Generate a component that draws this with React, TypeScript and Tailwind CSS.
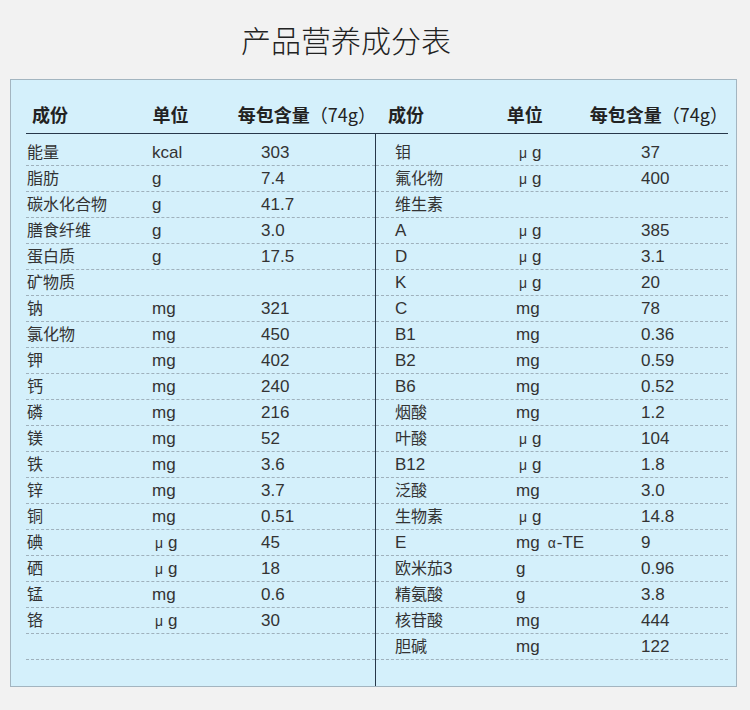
import React from "react";

type Row = [string, string, string];

const left: Row[] = [
  ["能量", "kcal", "303"],
  ["脂肪", "g", "7.4"],
  ["碳水化合物", "g", "41.7"],
  ["膳食纤维", "g", "3.0"],
  ["蛋白质", "g", "17.5"],
  ["矿物质", "", ""],
  ["钠", "mg", "321"],
  ["氯化物", "mg", "450"],
  ["钾", "mg", "402"],
  ["钙", "mg", "240"],
  ["磷", "mg", "216"],
  ["镁", "mg", "52"],
  ["铁", "mg", "3.6"],
  ["锌", "mg", "3.7"],
  ["铜", "mg", "0.51"],
  ["碘", "μg", "45"],
  ["硒", "μg", "18"],
  ["锰", "mg", "0.6"],
  ["铬", "μg", "30"],
  ["", "", ""],
];

const right: Row[] = [
  ["钼", "μg", "37"],
  ["氟化物", "μg", "400"],
  ["维生素", "", ""],
  ["A", "μg", "385"],
  ["D", "μg", "3.1"],
  ["K", "μg", "20"],
  ["C", "mg", "78"],
  ["B1", "mg", "0.36"],
  ["B2", "mg", "0.59"],
  ["B6", "mg", "0.52"],
  ["烟酸", "mg", "1.2"],
  ["叶酸", "μg", "104"],
  ["B12", "μg", "1.8"],
  ["泛酸", "mg", "3.0"],
  ["生物素", "μg", "14.8"],
  ["E", "mgαTE", "9"],
  ["欧米茄3", "g", "0.96"],
  ["精氨酸", "g", "3.8"],
  ["核苷酸", "mg", "444"],
  ["胆碱", "mg", "122"],
];

const isCJK = (ch: string) => /[\u3000-\u9fff\uff00-\uffef]/.test(ch);

function Mixed({ text }: { text: string }) {
  const runs: { cjk: boolean; s: string }[] = [];
  for (const ch of text) {
    const c = isCJK(ch);
    if (runs.length && runs[runs.length - 1].cjk === c) runs[runs.length - 1].s += ch;
    else runs.push({ cjk: c, s: ch });
  }
  return (
    <>
      {runs.map((r, i) => (
        <span key={i} className={r.cjk ? "text-[16px]" : "text-[17px]"}>
          {r.s}
        </span>
      ))}
    </>
  );
}

function Unit({ u }: { u: string }) {
  if (u === "μg")
    return (
      <span className="pl-[3px] text-[17px]">
        <span className="text-[14px]">μ</span>
        <span className="ml-[5px]">g</span>
      </span>
    );
  if (u === "mgαTE")
    return (
      <span className="text-[17px]">
        mg<span className="ml-[8px] text-[14px]">α</span>
        <span className="ml-[1px]">-TE</span>
      </span>
    );
  return <span className="text-[17px]">{u}</span>;
}

function DataRow({ r, side }: { r: Row; side: "l" | "r" }) {
  return (
    <div className="flex h-[26px] items-center border-b border-dashed border-[#9fb1bc] leading-[26px] text-[#333]">
      {side === "l" ? (
        <>
          <div className="w-[126px] pl-[1px] whitespace-nowrap">
            <Mixed text={r[0]} />
          </div>
          <div className="w-[109px] whitespace-nowrap">
            <Unit u={r[1]} />
          </div>
        </>
      ) : (
        <>
          <div className="w-[140px] pl-[19px] whitespace-nowrap">
            <Mixed text={r[0]} />
          </div>
          <div className="w-[125px] whitespace-nowrap">
            <Unit u={r[1]} />
          </div>
        </>
      )}
      <div className="flex-1 text-[17px] whitespace-nowrap">{r[2]}</div>
    </div>
  );
}

function HeaderHalf({ pad }: { pad: "l" | "r" }) {
  const isL = pad === "l";
  return (
    <div
      className={
        isL
          ? "flex w-[350px] items-end pl-[6px]"
          : "flex w-[352px] items-end pl-[12px]"
      }
    >
      <div className={isL ? "w-[123px] font-bold" : "w-[126px] font-bold"}>成份</div>
      <div className={isL ? "w-[87px] font-bold" : "w-[88px] font-bold"}>单位</div>
      <div className="whitespace-nowrap">
        <span className="font-bold">每包含量</span>
        <span className="font-normal">（74g）</span>
      </div>
    </div>
  );
}

export default function App() {
  return (
    <div className="min-h-[710px] w-[750px] bg-[#f2f2f2] font-['Liberation_Sans','Noto_Sans_CJK_SC',sans-serif]">
      <div className="h-[79px] pt-[24px] pr-[58px] text-center">
        <h1 className="font-['Noto_Sans_CJK_SC',sans-serif] text-[30px] leading-[30px] font-light text-[#222]">
          产品营养成分表
        </h1>
      </div>
      <div className="ml-[10px] w-[727px] border border-[#a3b5c0] bg-[#d4f0fb] pl-[15px] pr-[8px]">
        <div className="flex h-[54px] items-end border-b border-[#27384a] pb-[7px] font-['Noto_Sans_CJK_SC',sans-serif] text-[18px] leading-[24px] text-[#222]">
          <HeaderHalf pad="l" />
          <HeaderHalf pad="r" />
        </div>
        <div className="flex">
          <div className="w-[350px] border-r border-[#27384a] pt-[6px] pb-[26px]">
            {left.map((r, i) => (
              <DataRow key={i} r={r} side="l" />
            ))}
          </div>
          <div className="w-[352px] pt-[6px] pb-[26px]">
            {right.map((r, i) => (
              <DataRow key={i} r={r} side="r" />
            ))}
          </div>
        </div>
      </div>
    </div>
  );
}
